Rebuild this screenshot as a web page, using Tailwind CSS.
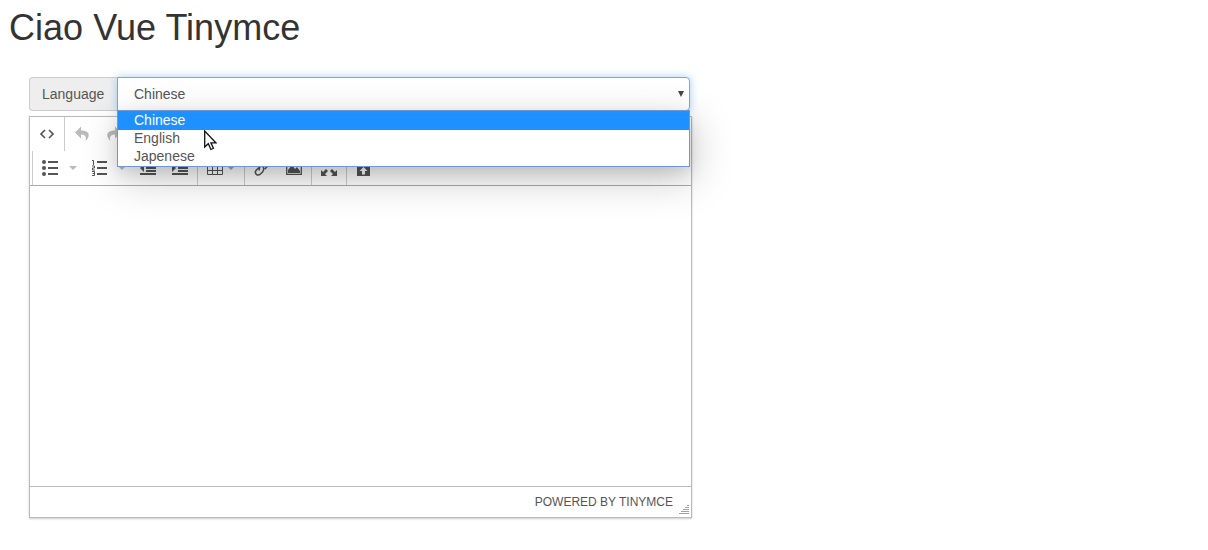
<!DOCTYPE html>
<html lang="en">
<head>
<meta charset="utf-8">
<title>Ciao Vue Tinymce</title>
<script src="https://cdn.jsdelivr.net/npm/@tailwindcss/browser@4"></script>
</head>
<body class="bg-white h-[550px] overflow-hidden font-['Liberation_Sans',Arial,sans-serif] text-[14px] text-[#555]">
<h1 class="pl-[9px] pt-[8px] text-[36px] leading-[40px] tracking-[0.03px] text-[#333]">Ciao Vue Tinymce</h1>
<main class="ml-[29px] mt-[29px] w-[663px]">
  <div class="relative z-10 flex h-[34px] w-[661px]">
    <label class="flex w-[88px] items-center rounded-l border border-r-0 border-[#ccc] bg-[#eee] pl-3">Language</label>
    <div class="relative flex flex-1 items-center justify-between rounded-r border border-[#66afe9] bg-white pl-4 pr-[5px] shadow-[0_0_8px_rgba(102,175,233,0.6)]">
      <span>Chinese</span>
      <svg class="h-[6px] w-[6px]" viewBox="0 0 6 6"><path d="M0 0h6L3 6z" fill="#444"/></svg>
    </div>
    <ul class="absolute left-[88px] top-[33px] h-[57px] w-[573px] border border-[#7096d5] bg-white leading-[18px] shadow-[3px_12px_42px_rgba(0,0,0,0.22),0_6px_14px_rgba(0,0,0,0.10)]">
      <li class="h-[19px] bg-[#1e90ff] pl-4 text-white">Chinese</li>
      <li class="-mt-px h-[18px] pl-4">English</li>
      <li class="h-[18px] pl-4">Japenese</li>
    </ul>
    <svg class="absolute left-[175px] top-[53px] h-[21px] w-[13px]" viewBox="0 0 13 21"><path d="M.7 1v16l3.600-3.300 2.600 5.800 2.500-1.200-2.500-5.500h5z" fill="#fff" stroke="#111" stroke-width="1.300"/></svg>
  </div>
  <section class="mt-[5px] h-[402px] border border-[#bababa] shadow-[0_1px_2px_rgba(0,0,0,0.2)]">
    <header class="h-[69px] border-b border-[#aaa] fill-[#555]">
      <div class="flex h-[34px] items-center">
        <div class="flex h-full w-[35px] items-center justify-center border-r border-[#ccc]">
          <svg class="h-4 w-4" viewBox="0 0 16 16"><path d="M6 4 2 8l4 4M10 4l4 4-4 4" fill="none" stroke="#555" stroke-width="1.700"/></svg>
        </div>
        <svg class="ml-[9px] h-4 w-4 fill-[#bbb]" viewBox="0 0 16 16"><path d="M7 .5v4c6 0 8.500 2.500 7.500 6-.5 2-1.500 3-3 4.500C12.500 11.500 12 8.500 7 8.500v4L1 6.500z"/></svg>
        <svg class="ml-4 h-4 w-4 fill-[#bbb]" viewBox="0 0 16 16"><path d="M9 .5v4C3 4.500 .5 7 1.500 10.500c.5 2 1.500 3 3 4.500C3.500 11.500 4 8.500 9 8.500v4l6-6z"/></svg>
      </div>
      <div class="ml-[2px] flex h-[34px] items-center border-l border-[#ccc] pl-[9px]">
        <svg class="h-4 w-4" viewBox="0 0 16 16"><circle cx="2" cy="2" r="2"/><circle cx="2" cy="8" r="2"/><circle cx="2" cy="14" r="2"/><path d="M6 1h10v2H6zM6 7h10v2H6zM6 13h10v2H6z"/></svg>
        <svg class="ml-[11px] h-1 w-2 fill-[#b5babd]" viewBox="0 0 8 4"><path d="M0 0h8L4 4z"/></svg>
        <svg class="ml-[14px] h-4 w-4" viewBox="0 0 16 16"><path d="M6 1h10v2H6zM6 7h10v2H6zM6 13h10v2H6z"/><path d="M1 .5h1.500V5M1 6h2.500v2h-2v2H4M1 11.500h2.500v4H1M1.500 13.500H3.500" fill="none" stroke="#555"/></svg>
        <svg class="ml-[11px] h-1 w-2 fill-[#b5babd]" viewBox="0 0 8 4"><path d="M0 0h8L4 4z"/></svg>
        <svg class="ml-[14px] h-4 w-4" viewBox="0 0 16 16"><path d="M0 1h16v2H0zM6 4h10v2H6zM6 7h10v2H6zM6 10h10v2H6zM0 13h16v2H0zM4 4v8L0 8z"/></svg>
        <svg class="ml-4 h-4 w-4" viewBox="0 0 16 16"><path d="M0 1h16v2H0zM6 4h10v2H6zM6 7h10v2H6zM6 10h10v2H6zM0 13h16v2H0zM0 4v8l4-4z"/></svg>
        <i class="ml-[9px] h-full w-px bg-[#ccc]"></i>
        <svg class="ml-[9px] h-4 w-4" viewBox="0 0 16 16"><path d="M.5 2.500h15v12H.5zM0 6.500h16M0 10.500h16M5.500 2v12.500M10.500 2v12.500" fill="none" stroke="#555"/></svg>
        <svg class="ml-1 h-1 w-2 fill-[#aaa]" viewBox="0 0 8 4"><path d="M0 0h8L4 4z"/></svg>
        <i class="ml-[9px] h-full w-px bg-[#ccc]"></i>
        <svg class="ml-[8px] h-4 w-4" viewBox="0 0 16 16"><path d="M6.500 10.500C5.500 8.500 7 6.500 8.500 4.500l2-2c3-2.500 6 .5 4 3.500L12 9M9.500 6.500c2 1.500 1.500 3.500 0 5.500l-2 2c-3 2.500-6.500-.5-4.500-3.500L6 7.500" fill="none" stroke="#555" stroke-width="1.500"/></svg>
        <svg class="ml-[17px] h-4 w-4" viewBox="0 0 16 16"><path d="M.7 1.700h14.600v12.600H.7z" fill="none" stroke="#555" stroke-width="1.300"/><path d="M2 13V10l4-5 3 4 2-2 3 4v2z"/></svg>
        <i class="ml-[9px] h-full w-px bg-[#ccc]"></i>
        <svg class="ml-[9px] h-4 w-4" viewBox="0 0 16 16"><path d="M0 0h6L4 2l3 3-2 2-3-3-2 2zM16 0v6l-2-2-3 3-2-2 3-3-2-2zM0 16v-6l2 2 3-3 2 2-3 3 2 2zM16 16h-6l2-2-3-3 2-2 3 3 2-2z"/></svg>
        <i class="ml-[9px] h-full w-px bg-[#ccc]"></i>
        <svg class="ml-[9px] h-4 w-4" viewBox="0 0 16 16"><path fill-rule="evenodd" d="M1 1h13v15H1zM7.500 7 3.500 11H6v3.500h3V11h2.500z"/></svg>
      </div>
    </header>
    <div class="h-[300px]"></div>
    <footer class="flex h-[31px] items-center justify-end border-t border-[#bbb] pr-[2px] text-[12px]">
      <span class="mr-[6px]">POWERED BY TINYMCE</span>
      <svg class="mt-[15px] h-[10px] w-[10px]" viewBox="0 0 10 10"><path d="M8 .5h2M6 2.500h4M4 4.500h6M2 6.500h8M0 8.500h10" stroke="#9aa3aa"/></svg>
    </footer>
  </section>
</main>
</body>
</html>
